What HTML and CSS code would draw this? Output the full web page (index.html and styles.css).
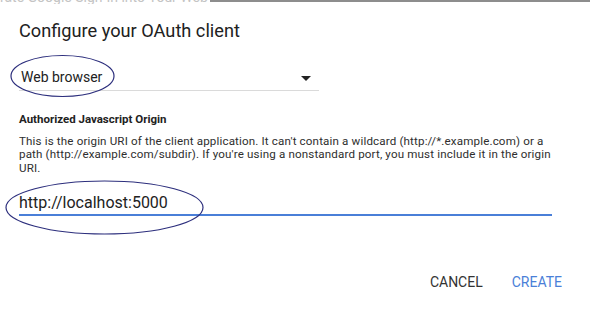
FILE: index.html
```html
<!DOCTYPE html>
<html>
<head>
<meta charset="utf-8">
<link rel="stylesheet" href="styles.css">
</head>
<body>
<div class="page">
  <div class="strip">
    <span class="bg-text">rate Google Sign-In into Your Web App</span>
    <span class="bg-line"></span>
  </div>
  <div class="dialog">
    <h1 class="title">Configure your OAuth client</h1>
    <div class="select">
      <span class="select-value">Web browser</span>
      <svg class="caret" width="10" height="5" viewBox="0 0 10 5"><path d="M0 0H10L5 5Z" fill="#222"/></svg>
    </div>
    <h2 class="label">Authorized Javascript Origin</h2>
    <p class="desc">This is the origin URI of the client application. It can't contain a wildcard (http://*.example.com) or a path (http://example.com/subdir). If you're using a nonstandard port, you must include it in the origin URI.</p>
    <div class="input">http://localhost:5000</div>
    <div class="actions">
      <button class="btn btn-cancel">CANCEL</button>
      <button class="btn btn-create">CREATE</button>
    </div>
  </div>
  <svg class="annot" width="604" height="327" viewBox="0 0 604 327">
    <ellipse cx="62.5" cy="76" rx="51.5" ry="20.5" fill="none" stroke="#2d2f7d" stroke-width="1.2"/>
    <ellipse cx="104.5" cy="207.5" rx="98.5" ry="26.5" fill="none" stroke="#2d2f7d" stroke-width="1.2"/>
  </svg>
</div>
</body>
</html>
```
FILE: styles.css
```css
* { box-sizing: border-box; }
html, body { margin: 0; padding: 0; background: #fff; }
body { font-family: Roboto, "Noto Sans", Arial, sans-serif; color: #222; }
.page { position: relative; width: 604px; height: 327px; overflow: hidden; background: #fff; }
.strip { display: flex; align-items: flex-start; height: 4px; overflow: hidden; }
.bg-text { width: 210px; flex: none; font-size: 14px; line-height: 14px; color: #c4c4c4; white-space: nowrap; overflow: hidden; margin-top: -10px; }
.bg-line { width: 380px; height: 2px; background: #8d8d8d; }
.dialog { padding: 15px 0 0 19px; }
.title { margin: 0; font-size: 18.2px; line-height: 24px; font-weight: 400; color: #212121; }
.select { margin-top: 24px; width: 300px; height: 24px; display: flex; justify-content: space-between; align-items: center; padding: 0 8px 3px 2px; border-bottom: 1px solid #dadada; }
.select-value { font-size: 14px; line-height: 20px; color: #222; }
.caret { display: block; margin-top: 2px; }
.label { margin: 21px 0 0; font-size: 11.5px; line-height: 14px; font-weight: 700; color: #222; }
.desc { margin: 8.5px 0 0; width: 545px; font-size: 11.6px; line-height: 13.5px; letter-spacing: 0.15px; color: #2e2e2e; }
.input { margin-top: 17.5px; width: 533px; font-size: 16px; line-height: 20px; color: #222; border-bottom: 2px solid #4a7fd8; padding-bottom: 1.5px; }
.actions { display: flex; justify-content: flex-end; gap: 29px; padding-right: 42px; margin-top: 55.5px; }
.btn { background: none; border: 0; padding: 0; font-family: Roboto, "Noto Sans", Arial, sans-serif; font-size: 14px; line-height: 20px; cursor: pointer; }
.btn-cancel { color: #333; }
.btn-create { color: #4a7fd8; }
.annot { position: absolute; left: 0; top: 0; pointer-events: none; }
```
